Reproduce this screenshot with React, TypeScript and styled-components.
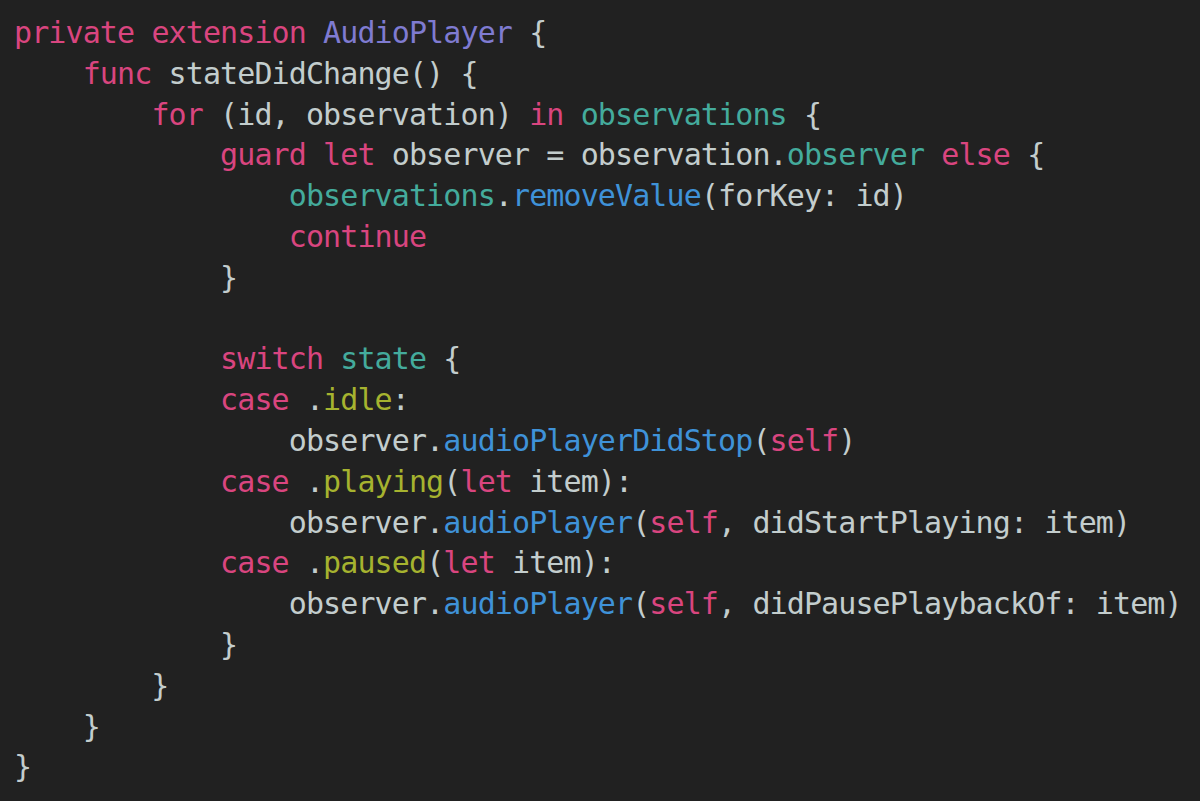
import React from "react";
import styled, { createGlobalStyle } from "styled-components";

const Global = createGlobalStyle`
  html, body { margin: 0; padding: 0; background: #212121; }
  body { width: 1200px; height: 801px; overflow: hidden; }
`;

type Kind = "t" | "k" | "ty" | "v" | "f" | "c";

const colors: Record<Kind, string> = {
  t: "#c3cdcd",
  k: "#d9457f",
  ty: "#7f7bd1",
  v: "#44ab9c",
  f: "#3f92d8",
  c: "#a6b32f",
};

const Editor = styled.div`
  width: 1200px;
  height: 801px;
  box-sizing: border-box;
  padding: 13px 0 0 14px;
  background: #212121;
  font-family: "DejaVu Sans Mono", "Liberation Mono", monospace;
  font-size: 30px;
  letter-spacing: -0.89px;
  line-height: 40.8px;
  white-space: pre;
`;

const Line = styled.div`
  height: 40.8px;
`;

const Tok = styled.span<{ $kind: Kind }>`
  color: ${(p) => colors[p.$kind]};
`;

type Seg = [Kind, string];

const lines: Seg[][] = [
  [["k", "private"], ["t", " "], ["k", "extension"], ["t", " "], ["ty", "AudioPlayer"], ["t", " {"]],
  [["t", "    "], ["k", "func"], ["t", " stateDidChange() {"]],
  [["t", "        "], ["k", "for"], ["t", " (id, observation) "], ["k", "in"], ["t", " "], ["v", "observations"], ["t", " {"]],
  [["t", "            "], ["k", "guard"], ["t", " "], ["k", "let"], ["t", " observer = observation."], ["v", "observer"], ["t", " "], ["k", "else"], ["t", " {"]],
  [["t", "                "], ["v", "observations"], ["t", "."], ["f", "removeValue"], ["t", "(forKey: id)"]],
  [["t", "                "], ["k", "continue"]],
  [["t", "            }"]],
  [["t", ""]],
  [["t", "            "], ["k", "switch"], ["t", " "], ["v", "state"], ["t", " {"]],
  [["t", "            "], ["k", "case"], ["t", " ."], ["c", "idle"], ["t", ":"]],
  [["t", "                observer."], ["f", "audioPlayerDidStop"], ["t", "("], ["k", "self"], ["t", ")"]],
  [["t", "            "], ["k", "case"], ["t", " ."], ["c", "playing"], ["t", "("], ["k", "let"], ["t", " item):"]],
  [["t", "                observer."], ["f", "audioPlayer"], ["t", "("], ["k", "self"], ["t", ", didStartPlaying: item)"]],
  [["t", "            "], ["k", "case"], ["t", " ."], ["c", "paused"], ["t", "("], ["k", "let"], ["t", " item):"]],
  [["t", "                observer."], ["f", "audioPlayer"], ["t", "("], ["k", "self"], ["t", ", didPausePlaybackOf: item)"]],
  [["t", "            }"]],
  [["t", "        }"]],
  [["t", "    }"]],
  [["t", "}"]],
];

export default function App() {
  return (
    <>
      <Global />
      <Editor>
        {lines.map((segs, i) => (
          <Line key={i}>
            {segs.map(([k, s], j) => (
              <Tok key={j} $kind={k}>
                {s}
              </Tok>
            ))}
          </Line>
        ))}
      </Editor>
    </>
  );
}
